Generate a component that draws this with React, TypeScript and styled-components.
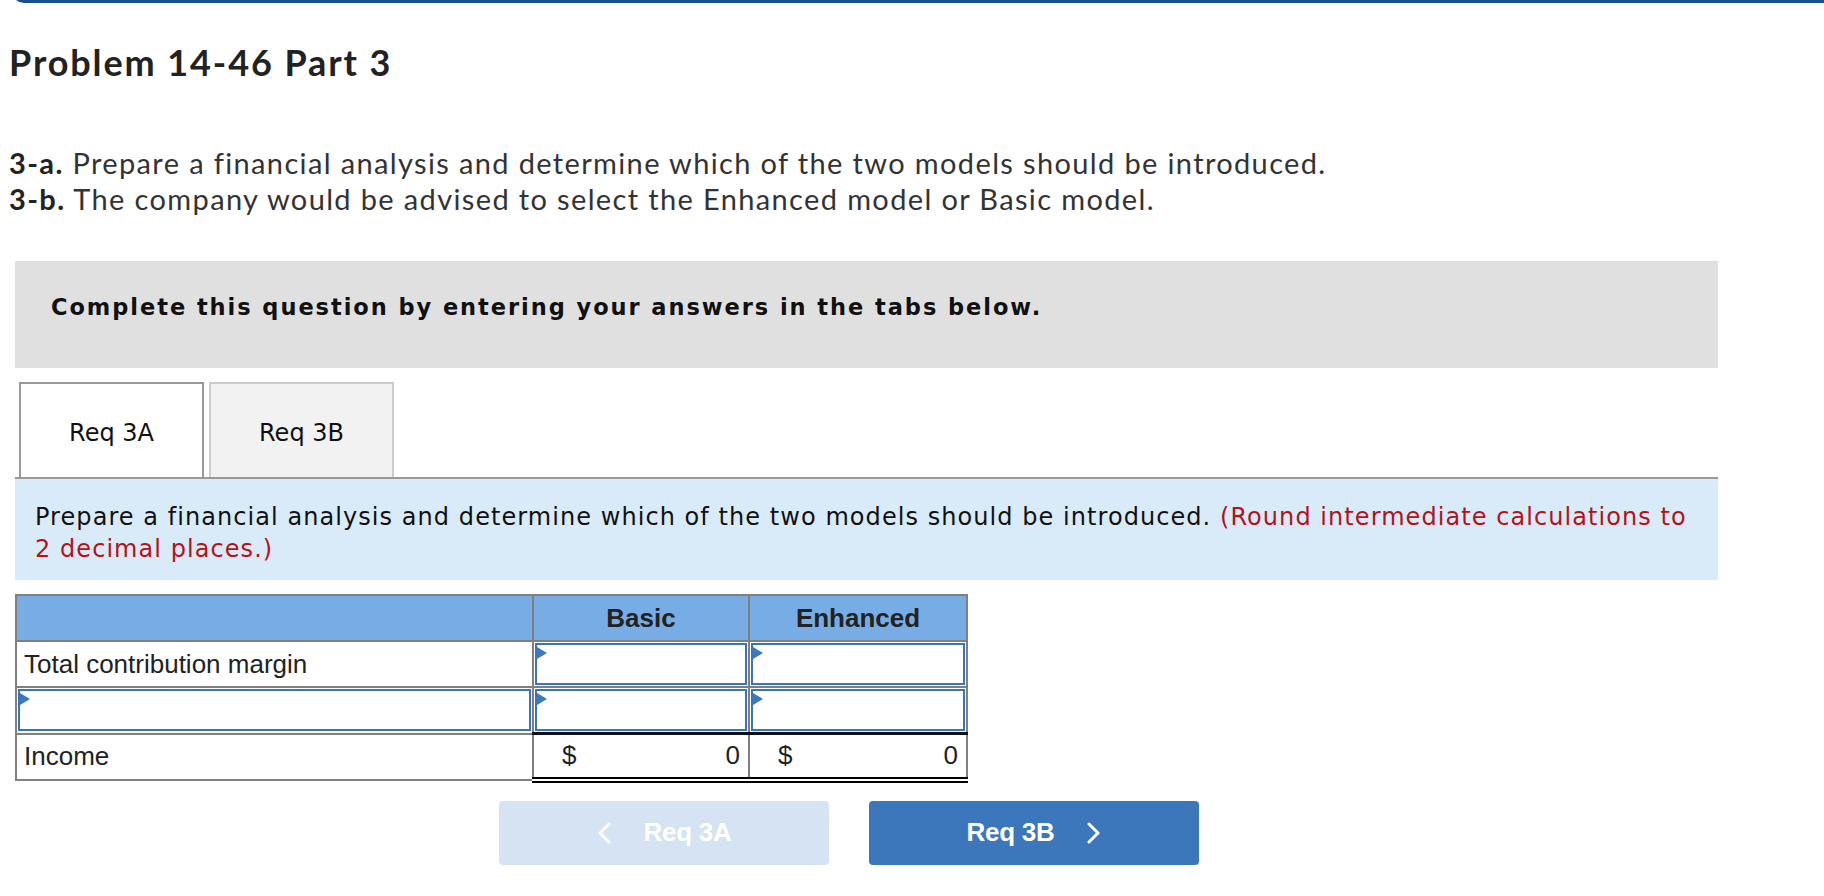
import React from "react";
import styled, { createGlobalStyle } from "styled-components";

const COLORS = {
  frame: "#1c4f8c",
  ink: "#222222",
  body: "#333333",
  banner: "#e0e0e0",
  tabLine: "#999999",
  tabIdle: "#f2f2f2",
  tabIdleBorder: "#cccccc",
  info: "#d9ebf9",
  red: "#b5121b",
  grid: "#808080",
  head: "#78ace4",
  input: "#3b74b8",
  marker: "#3a78c2",
  prev: "#d6e3f2",
  next: "#3b77ba",
};

const GlobalStyle = createGlobalStyle`
  html, body {
    margin: 0;
    padding: 0;
    background: #ffffff;
  }
  body {
    font-family: "DejaVu Sans", Verdana, sans-serif;
    color: ${COLORS.ink};
  }
`;

const Page = styled.div`
  width: 1824px;
  min-height: 896px;
  overflow: hidden;
`;

const TopFrame = styled.div`
  box-sizing: border-box;
  height: 14px;
  margin: -11px 0 0 12px;
  border-left: 3px solid ${COLORS.frame};
  border-bottom: 3px solid ${COLORS.frame};
  border-bottom-left-radius: 12px;
`;

const Header = styled.header`
  padding-left: 9px;
  font-family: Lato, "Open Sans", sans-serif;
`;

const Title = styled.h1`
  margin: 38px 0 0;
  font-size: 36px;
  line-height: 42px;
  font-weight: 700;
  letter-spacing: 1.9px;
  color: ${COLORS.ink};
`;

const Steps = styled.div`
  margin-top: 62px;
  font-size: 29px;
  line-height: 36px;
  letter-spacing: 1.36px;
  color: ${COLORS.body};
`;

const Step = styled.div`
  b {
    color: ${COLORS.ink};
    font-weight: 700;
  }
`;

const Question = styled.section`
  margin: 44px 106px 0 15px;
`;

const Banner = styled.div`
  background: ${COLORS.banner};
  padding: 33px 36px 47px;
  font-size: 22.5px;
  line-height: 27px;
  font-weight: 700;
  letter-spacing: 1.95px;
  color: #111;
`;

const TabStrip = styled.div`
  display: flex;
  gap: 5px;
  margin-top: 14px;
  padding-left: 4px;
  border-bottom: 2px solid ${COLORS.tabLine};
`;

const Tab = styled.div<{ $active?: boolean }>`
  box-sizing: border-box;
  width: 185px;
  height: 95px;
  display: flex;
  align-items: center;
  justify-content: center;
  padding-top: 4px;
  font-size: 24px;
  color: #111;
  background: ${(p) => (p.$active ? "#ffffff" : COLORS.tabIdle)};
  border: 2px solid ${(p) => (p.$active ? COLORS.tabLine : COLORS.tabIdleBorder)};
  border-bottom: none;
`;

const Info = styled.div`
  background: ${COLORS.info};
  padding: 22px 21px 15px 20px;
  font-size: 24px;
  line-height: 32px;
  letter-spacing: 1.06px;
  color: #111;
`;

const Note = styled.span`
  color: ${COLORS.red};
`;

const Sheet = styled.table`
  margin-top: 14px;
  border-collapse: collapse;
  font-family: "Liberation Sans", Arial, sans-serif;
  font-size: 26px;
  color: ${COLORS.ink};

  td,
  th {
    border: 2px solid ${COLORS.grid};
    padding: 0;
    height: 44px;
  }
`;

const HeadCell = styled.th<{ $w: number }>`
  width: ${(p) => p.$w}px;
  background: ${COLORS.head};
  font-weight: 700;
  text-align: center;
`;

const LabelCell = styled.td`
  padding-left: 7px !important;
  text-align: left;
`;

const EntryCell = styled.td`
  padding: 1px !important;
  height: 42px !important;
`;

const Entry = styled.div`
  position: relative;
  box-sizing: border-box;
  height: 42px;
  border: 2.5px solid ${COLORS.input};
  background: #fff;

  &::before {
    content: "";
    position: absolute;
    left: 0;
    top: 2px;
    border-top: 6px solid transparent;
    border-bottom: 6px solid transparent;
    border-left: 10px solid ${COLORS.marker};
  }
`;

const TotalCell = styled.td`
  height: 37px !important;
  border-top: 3px solid #111 !important;
  border-bottom: 6px double #000 !important;
`;

const Amount = styled.div`
  display: flex;
  justify-content: space-between;
  align-items: center;
  padding: 0 8px 0 28px;
`;

const Nav = styled.div`
  display: flex;
  justify-content: center;
  gap: 40px;
  margin-top: 18px;
  padding-right: 35px;
`;

const NavButton = styled.button<{ $primary?: boolean }>`
  width: 330px;
  height: 64px;
  display: flex;
  align-items: center;
  justify-content: center;
  gap: 32px;
  border: none;
  border-radius: 4px;
  background: ${(p) => (p.$primary ? COLORS.next : COLORS.prev)};
  color: #ffffff;
  font-family: "Liberation Sans", Arial, sans-serif;
  font-size: 26px;
  font-weight: 700;
  letter-spacing: -0.3px;
  cursor: ${(p) => (p.$primary ? "pointer" : "default")};
`;

const Chevron = ({ dir }: { dir: "left" | "right" }) => (
  <svg width="15" height="22" viewBox="0 0 15 22" aria-hidden>
    <polyline
      points={dir === "left" ? "12,2 3,11 12,20" : "3,2 12,11 3,20"}
      fill="none"
      stroke="#ffffff"
      strokeWidth="3"
      strokeLinecap="round"
      strokeLinejoin="round"
    />
  </svg>
);

const App: React.FC = () => (
  <>
    <GlobalStyle />
    <Page>
      <TopFrame />
      <Header>
        <Title>Problem 14-46 Part 3</Title>
        <Steps>
          <Step>
            <b>3-a.</b> Prepare a financial analysis and determine which of the two models should be introduced.
          </Step>
          <Step>
            <b>3-b.</b> The company would be advised to select the Enhanced model or Basic model.
          </Step>
        </Steps>
      </Header>
      <Question>
        <Banner>Complete this question by entering your answers in the tabs below.</Banner>
        <TabStrip>
          <Tab $active>Req 3A</Tab>
          <Tab>Req 3B</Tab>
        </TabStrip>
        <Info>
          Prepare a financial analysis and determine which of the two models should be introduced.{" "}
          <Note>(Round intermediate calculations to 2 decimal places.)</Note>
        </Info>
        <Sheet>
          <thead>
            <tr>
              <HeadCell $w={515} />
              <HeadCell $w={214}>Basic</HeadCell>
              <HeadCell $w={216}>Enhanced</HeadCell>
            </tr>
          </thead>
          <tbody>
            <tr>
              <LabelCell>Total contribution margin</LabelCell>
              <EntryCell>
                <Entry />
              </EntryCell>
              <EntryCell>
                <Entry />
              </EntryCell>
            </tr>
            <tr>
              <EntryCell>
                <Entry />
              </EntryCell>
              <EntryCell>
                <Entry />
              </EntryCell>
              <EntryCell>
                <Entry />
              </EntryCell>
            </tr>
            <tr>
              <LabelCell>Income</LabelCell>
              <TotalCell>
                <Amount>
                  <span>$</span>
                  <span>0</span>
                </Amount>
              </TotalCell>
              <TotalCell>
                <Amount>
                  <span>$</span>
                  <span>0</span>
                </Amount>
              </TotalCell>
            </tr>
          </tbody>
        </Sheet>
        <Nav>
          <NavButton disabled>
            <Chevron dir="left" />
            Req 3A
          </NavButton>
          <NavButton $primary>
            Req 3B
            <Chevron dir="right" />
          </NavButton>
        </Nav>
      </Question>
    </Page>
  </>
);

export default App;
